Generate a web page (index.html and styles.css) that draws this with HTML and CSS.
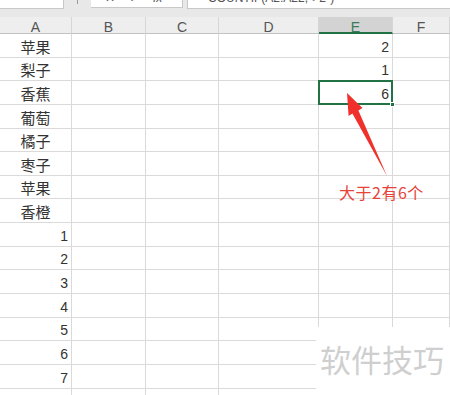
FILE: index.html
```html
<!DOCTYPE html>
<html lang="zh">
<head>
<meta charset="utf-8">
<title>COUNTIF</title>
<link rel="stylesheet" href="styles.css">
</head>
<body>
<div class="sheet">
  <div class="toolbar">
    <div class="namebox"></div>
    <div class="tick"></div>
    <div class="fxbox"><span class="cut">✕</span><span class="cut">✓</span><span class="cut fx">fx</span></div>
    <div class="formula"><span class="cut">=COUNTIF(A2:A22,"&gt;2")</span></div>
  </div>
  <div class="row head">
    <div class="h">A</div><div class="h">B</div><div class="h">C</div><div class="h">D</div><div class="h sel">E</div><div class="h">F</div>
  </div>
  <div class="row"><div class="c t">苹果</div><div class="c"></div><div class="c"></div><div class="c"></div><div class="c n">2</div><div class="c"></div></div>
  <div class="row"><div class="c t">梨子</div><div class="c"></div><div class="c"></div><div class="c"></div><div class="c n">1</div><div class="c"></div></div>
  <div class="row"><div class="c t">香蕉</div><div class="c"></div><div class="c"></div><div class="c"></div><div class="c n active">6</div><div class="c"></div></div>
  <div class="row"><div class="c t">葡萄</div><div class="c"></div><div class="c"></div><div class="c"></div><div class="c"></div><div class="c"></div></div>
  <div class="row"><div class="c t">橘子</div><div class="c"></div><div class="c"></div><div class="c"></div><div class="c"></div><div class="c"></div></div>
  <div class="row"><div class="c t">枣子</div><div class="c"></div><div class="c"></div><div class="c"></div><div class="c"></div><div class="c"></div></div>
  <div class="row"><div class="c t">苹果</div><div class="c"></div><div class="c"></div><div class="c"></div><div class="c"></div><div class="c"></div></div>
  <div class="row"><div class="c t">香橙</div><div class="c"></div><div class="c"></div><div class="c"></div><div class="c"></div><div class="c"></div></div>
  <div class="row"><div class="c n">1</div><div class="c"></div><div class="c"></div><div class="c"></div><div class="c"></div><div class="c"></div></div>
  <div class="row"><div class="c n">2</div><div class="c"></div><div class="c"></div><div class="c"></div><div class="c"></div><div class="c"></div></div>
  <div class="row"><div class="c n">3</div><div class="c"></div><div class="c"></div><div class="c"></div><div class="c"></div><div class="c"></div></div>
  <div class="row"><div class="c n">4</div><div class="c"></div><div class="c"></div><div class="c"></div><div class="c"></div><div class="c"></div></div>
  <div class="row"><div class="c n">5</div><div class="c"></div><div class="c"></div><div class="c"></div><div class="c"></div><div class="c"></div></div>
  <div class="row"><div class="c n">6</div><div class="c"></div><div class="c"></div><div class="c"></div><div class="c"></div><div class="c"></div></div>
  <div class="row"><div class="c n">7</div><div class="c"></div><div class="c"></div><div class="c"></div><div class="c"></div><div class="c"></div></div>
  <div class="row"><div class="c"></div><div class="c"></div><div class="c"></div><div class="c"></div><div class="c"></div><div class="c"></div></div>

  <svg class="arrow" width="450" height="395" viewBox="0 0 450 395">
    <polygon points="347,93 362.5,108 358.4,110.5 387,176 352.4,113.6 348.6,116" fill="#f0302a"/>
  </svg>
  <div class="note">大于2有6个</div>
  <div class="watermark">软件技巧</div>
</div>
</body>
</html>
```
FILE: styles.css
```css
html, body {
  margin: 0;
  padding: 0;
  background: #ffffff;
}
.sheet {
  position: relative;
  width: 450px;
  height: 395px;
  overflow: hidden;
  font-family: "Liberation Sans", Arial, sans-serif;
  color: #333333;
}
.toolbar {
  display: flex;
  height: 17px;
  background: #e8e8e8;
}
.namebox {
  width: 63px;
  height: 8px;
  background: #ffffff;
  border-right: 1px solid #c8c8c8;
  border-bottom: 1px solid #c8c8c8;
}
.tick {
  width: 1px;
  height: 4px;
  margin-left: 13px;
  background: #9a9a9a;
}
.fxbox {
  display: flex;
  gap: 14px;
  margin-left: 13px;
  width: 92px;
  height: 8px;
  padding-left: 14px;
  box-sizing: border-box;
  background: #ffffff;
  border-bottom: 1px solid #c8c8c8;
  border-right: 1px solid #c8c8c8;
  overflow: hidden;
}
.formula {
  flex: 1;
  margin-left: 4px;
  height: 8px;
  padding-left: 13px;
  background: #ffffff;
  border-left: 1px solid #c8c8c8;
  border-bottom: 1px solid #c8c8c8;
  overflow: hidden;
}
.cut {
  display: block;
  margin-top: -9px;
  font-size: 12px;
  line-height: 14px;
  color: #555555;
  white-space: nowrap;
}
.fx {
  font-style: italic;
}
.row {
  display: grid;
  grid-template-columns: 72px 74px 73px 100px 74px 57px;
  height: 23.65px;
}
.row.head {
  height: 17px;
  background: #eeeeee;
}
.h {
  box-sizing: border-box;
  height: 17px;
  padding-top: 2px;
  text-align: center;
  font-size: 14px;
  line-height: 16px;
  color: #555555;
  border-right: 1px solid #d6d6d6;
  border-bottom: 1px solid #c2c2c2;
}
.h.sel {
  background: #d3d3d3;
  color: #3d7a5a;
  border-bottom: 2px solid #217346;
}
.c {
  box-sizing: border-box;
  display: flex;
  align-items: flex-end;
  border-right: 1px solid #dadada;
  border-bottom: 1px solid #dadada;
}
.c.t {
  justify-content: center;
  padding-bottom: 1px;
  font-family: "Noto Sans CJK SC", sans-serif;
  font-size: 15px;
  line-height: 18px;
  color: #333333;
}
.c.n {
  justify-content: flex-end;
  padding: 0 3px 2px 0;
  font-size: 14px;
  line-height: 16px;
  color: #333333;
}
.c.active {
  position: relative;
}
.c.active::before {
  content: "";
  position: absolute;
  left: -1px;
  top: -1px;
  right: -1px;
  bottom: -1px;
  border: 2px solid #217346;
}
.c.active::after {
  content: "";
  position: absolute;
  right: -3px;
  bottom: -3px;
  width: 5px;
  height: 5px;
  background: #217346;
  border: 1px solid #ffffff;
  box-sizing: border-box;
}
.arrow {
  position: absolute;
  left: 0;
  top: 0;
  pointer-events: none;
}
.note {
  position: absolute;
  left: 339px;
  top: 183px;
  font-family: "Noto Sans CJK SC", sans-serif;
  font-size: 16px;
  line-height: 19px;
  letter-spacing: 0.5px;
  color: #e8433a;
  white-space: nowrap;
}
.watermark {
  position: absolute;
  left: 316px;
  top: 327px;
  right: 0;
  bottom: 0;
  padding: 15px 0 0 4px;
  background: #ffffff;
  font-family: "Noto Sans CJK SC", sans-serif;
  font-size: 31px;
  line-height: 33px;
  color: #cfcfcf;
  white-space: nowrap;
}
```
